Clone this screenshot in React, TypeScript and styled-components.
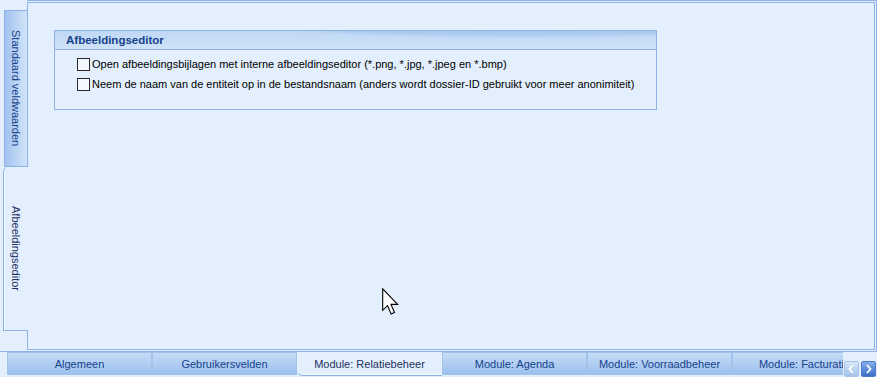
import React from 'react'
import styled, { createGlobalStyle } from 'styled-components'

const line = '#8db2e3'
const navy = '#15428b'
const paper = '#e3effc'

const GlobalStyle = createGlobalStyle`
  html, body { margin: 0; padding: 0; background: ${paper}; }
  body { font-family: "Liberation Sans", Arial, sans-serif; font-size: 11px; }
  * { box-sizing: border-box; }
`

const Screen = styled.div`
  position: relative;
  width: 877px;
  height: 377px;
  overflow: hidden;
  display: flex;
  flex-direction: column;
  background: ${paper};
`

const Frame = styled.div`
  display: flex;
  height: 352px;
  border-bottom: 1px solid ${line};
`

const SideStrip = styled.div`
  width: 27px;
  flex-shrink: 0;
  display: flex;
  flex-direction: column;
  padding-top: 10px;
`

const SideTab = styled.div<{ $active?: boolean }>`
  display: flex;
  align-items: center;
  justify-content: center;
  writing-mode: vertical-rl;
  font-size: 11px;
  ${({ $active }) => $active
    ? `
      position: relative;
      z-index: 1;
      margin-left: 3px;
      margin-right: -1px;
      width: 25px;
      height: 164px;
      background: ${paper};
      border-left: 1px solid ${line};
      border-bottom: 1px solid ${line};
      border-top-left-radius: 5px;
      box-shadow: inset 1px 0 0 #f4f9ff;
      color: #1f2f66;
    `
    : `
      margin-left: 4px;
      width: 23px;
      height: 157px;
      background: linear-gradient(to right, #a2c3ef, #d1e3f8);
      border: 1px solid ${line};
      border-right: none;
      color: ${navy};
    `}
`

const PanelOuter = styled.div`
  flex: 1;
  height: 351px;
  border-top: 1px solid ${line};
  border-right: 1px solid ${line};
  padding: 1px 1px 1px 0;
`

const Panel = styled.div`
  height: 100%;
  background: ${paper};
  border: 1px solid ${line};
  padding: 27px 0 0 26px;
`

const Group = styled.div`
  width: 603px;
  height: 80px;
  border: 1px solid ${line};
`

const GroupHeader = styled.div`
  height: 19px;
  padding-left: 11px;
  display: flex;
  align-items: center;
  border-bottom: 1px solid ${line};
  background:
    radial-gradient(ellipse 70% 140% at 78% -60%, rgba(138, 180, 232, 0.85) 0%, rgba(138, 180, 232, 0.35) 60%, rgba(138, 180, 232, 0) 72%),
    linear-gradient(to bottom, #c0d8f5, #cfe2f8);
  color: ${navy};
  font-weight: bold;
  font-size: 11.5px;
`

const GroupBody = styled.div`
  padding: 4px 0 0 22px;
`

const Row = styled.label`
  display: flex;
  align-items: center;
  gap: 2px;
  height: 20px;
  color: #000;
  font-size: 11px;
`

const Box = styled.span`
  width: 13px;
  height: 13px;
  flex-shrink: 0;
  border: 1px solid #2a2a2a;
  background: #f3f8fe;
`

const BottomBar = styled.div`
  display: flex;
  height: 25px;
  padding-left: 7px;
`

const TabViewport = styled.div`
  width: 836px;
  display: flex;
  overflow: hidden;
  align-items: flex-start;
`

const BottomTab = styled.div<{ $active?: boolean }>`
  flex-shrink: 0;
  width: 145px;
  display: flex;
  align-items: center;
  justify-content: center;
  white-space: nowrap;
  font-size: 11px;
  ${({ $active }) => $active
    ? `
      height: 24px;
      background: ${paper};
      border-bottom: 1px solid ${line};
      border-bottom-left-radius: 6px;
      box-shadow: inset 0 -1px 0 #f2f8ff;
      color: #22305e;
    `
    : `
      height: 23px;
      background: linear-gradient(to bottom, #c6dcf6, #9cc0ee);
      border: 1px solid #a2c2ec;
      color: ${navy};
    `}
`

const NavGroup = styled.div`
  display: flex;
  align-self: flex-end;
  gap: 2px;
  margin-left: 1px;
`

const NavButton = styled.div<{ $enabled?: boolean }>`
  width: 15px;
  height: 16px;
  display: flex;
  align-items: center;
  justify-content: center;
  border-radius: 2px;
  border: 1px solid ${({ $enabled }) => $enabled ? '#4a7bcc' : '#a8c3e8'};
  background: ${({ $enabled }) => $enabled
    ? 'linear-gradient(to bottom, #86aeea, #3d6ec6)'
    : 'linear-gradient(to bottom, #d8e7f9, #a4c3ec)'};
`

const Pointer = styled.svg`
  position: absolute;
  left: 382px;
  top: 288px;
`

const Chevron = ({ dir }: { dir: 'left' | 'right' }) => (
  <svg width="9" height="10" viewBox="0 0 9 10">
    <polyline
      points={dir === 'left' ? '6,1 2.5,5 6,9' : '3,1 6.5,5 3,9'}
      fill="none"
      stroke="#fff"
      strokeWidth="1.8"
    />
  </svg>
)

const bottomTabs = [
  'Algemeen',
  'Gebruikersvelden',
  'Module: Relatiebeheer',
  'Module: Agenda',
  'Module: Voorraadbeheer',
  'Module: Facturatie',
]

export default function App() {
  return (
    <Screen>
      <GlobalStyle />
      <Frame>
        <SideStrip>
          <SideTab>Standaard veldwaarden</SideTab>
          <SideTab $active>Afbeeldingseditor</SideTab>
        </SideStrip>
        <PanelOuter>
          <Panel>
            <Group>
              <GroupHeader>Afbeeldingseditor</GroupHeader>
              <GroupBody>
                <Row><Box />Open afbeeldingsbijlagen met interne afbeeldingseditor (*.png, *.jpg, *.jpeg en *.bmp)</Row>
                <Row><Box />Neem de naam van de entiteit op in de bestandsnaam (anders wordt dossier-ID gebruikt voor meer anonimiteit)</Row>
              </GroupBody>
            </Group>
          </Panel>
        </PanelOuter>
      </Frame>
      <BottomBar>
        <TabViewport>
          {bottomTabs.map(t => (
            <BottomTab key={t} $active={t === 'Module: Relatiebeheer'}>{t}</BottomTab>
          ))}
        </TabViewport>
        <NavGroup>
          <NavButton><Chevron dir="left" /></NavButton>
          <NavButton $enabled><Chevron dir="right" /></NavButton>
        </NavGroup>
      </BottomBar>
      <Pointer width="18" height="28" viewBox="0 0 13 20">
        <path
          d="M0.5 0.5 L0.5 16 L4 12.6 L6.6 18.6 L9 17.6 L6.5 11.7 L11.3 11.7 Z"
          fill="#fff"
          stroke="#000"
          strokeWidth="0.8"
          strokeLinejoin="miter"
        />
      </Pointer>
    </Screen>
  )
}
